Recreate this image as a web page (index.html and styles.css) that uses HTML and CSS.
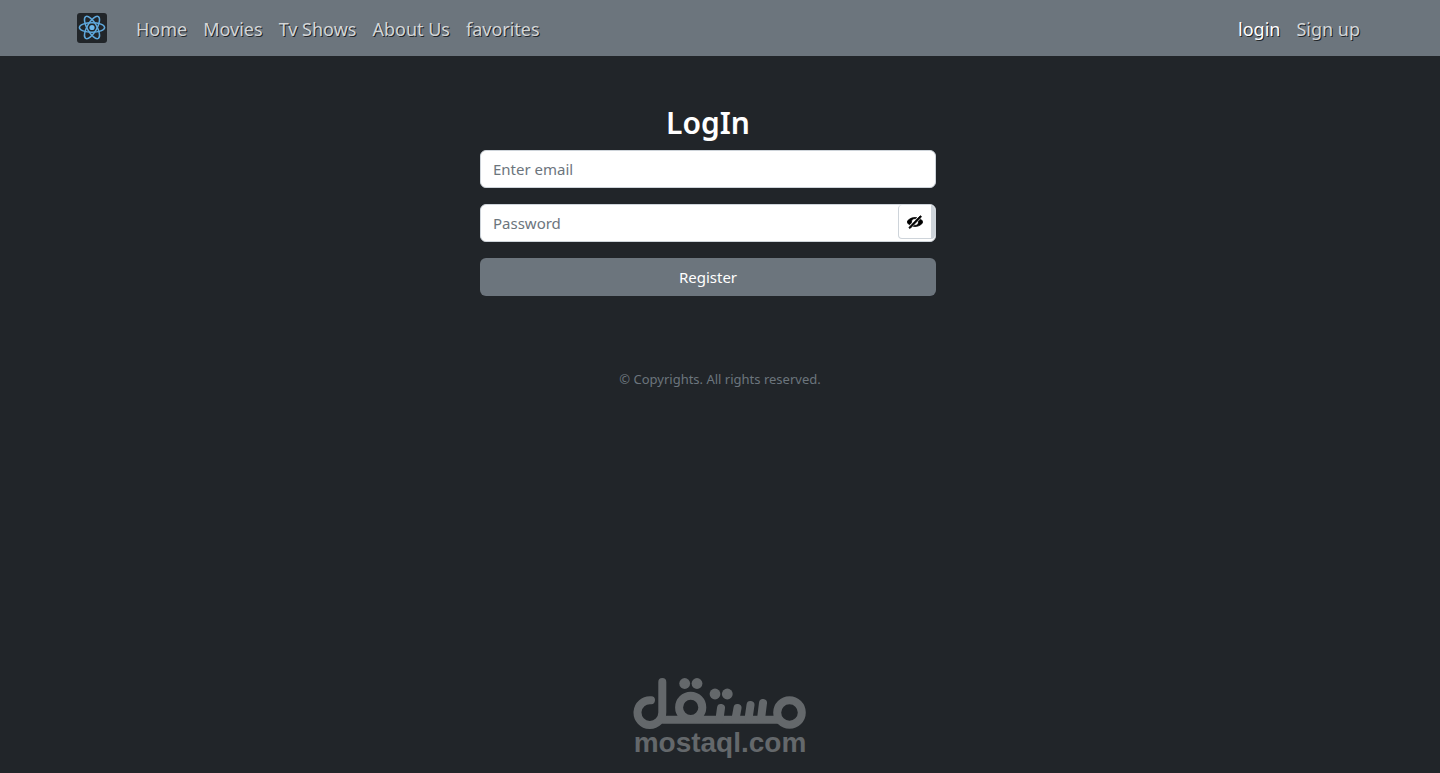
FILE: index.html
```html
<!doctype html>
<html lang="en">
  <head>
    <meta charset="utf-8" />
    <meta name="viewport" content="width=device-width, initial-scale=1" />
    <title>Login</title>
    <link rel="stylesheet" href="styles.css">
  </head>
  <body>
    <header class="navbar">
      <nav class="container">
        <a class="brand" href="#" aria-label="Home page">
          <svg width="30" height="30" viewBox="0 0 30 30">
            <rect width="30" height="30" rx="3" fill="#212529" />
            <g fill="none" stroke="#5fa8dc" stroke-width="1.5">
              <ellipse cx="15" cy="14.5" rx="12.6" ry="4.8" />
              <ellipse cx="15" cy="14.5" rx="12.6" ry="4.8" transform="rotate(60 15 14.5)" />
              <ellipse cx="15" cy="14.5" rx="12.6" ry="4.8" transform="rotate(120 15 14.5)" />
            </g>
            <circle cx="15" cy="14.5" r="2.6" fill="#6cb8ec" />
          </svg>
        </a>
        <ul class="nav">
          <li><a href="#">Home</a></li>
          <li><a href="#">Movies</a></li>
          <li><a href="#">Tv Shows</a></li>
          <li><a href="#">About Us</a></li>
          <li><a href="#">favorites</a></li>
        </ul>
        <ul class="nav nav-right">
          <li><a class="active" href="#">login</a></li>
          <li><a href="#">Sign up</a></li>
        </ul>
      </nav>
    </header>

    <main class="login">
      <h1>LogIn</h1>
      <form>
        <input class="field" type="email" placeholder="Enter email" aria-label="Email" />
        <div class="field password">
          <input type="password" placeholder="Password" aria-label="Password" />
          <button class="toggle" type="button" aria-label="Show password">
            <svg width="16" height="16" viewBox="0 0 20 20">
              <path d="M17.6 2.6a1 1 0 0 0-1.4 0L3 16.2a1 1 0 1 0 1.4 1.4L17.6 4a1 1 0 0 0 0-1.4zM3.108 13.498l2.56-2.56A4.18 4.18 0 0 1 5.555 10c0-2.379 1.99-4.309 4.445-4.309.286 0 .564.032.835.082l1.203-1.202A12.645 12.645 0 0 0 10 4.401C3.44 4.4 0 9.231 0 10c0 .423 1.057 2.09 3.108 3.497zM16.895 6.502l-2.562 2.56c.069.302.111.613.111.938 0 2.379-1.989 4.307-4.444 4.307-.284 0-.56-.032-.829-.081l-1.204 1.203c.642.104 1.316.17 2.033.17 6.56 0 10-4.833 10-5.599 0-.424-1.056-2.09-3.105-3.498z" stroke="#000" stroke-width="1" />
            </svg>
          </button>
        </div>
        <button class="submit" type="submit">Register</button>
      </form>
    </main>

    <footer>&copy; Copyrights. All rights reserved.</footer>

    <div class="watermark">
      <svg width="174" height="52" viewBox="0 0 174 52" fill="none" stroke="#64686b" stroke-width="8" stroke-linecap="round">
        <path d="M18 23.2a12.4 12.4 0 1 0 11.3 12.3V5" />
        <path d="M30 42.7H145" />
        <circle cx="57.7" cy="30.4" r="11.6" />
        <circle cx="156.5" cy="35.5" r="12.3" />
        <path d="M88 31l-1.5 11M104.5 31l-2 11M117.5 28l-2 14M130 26l-2 16" />
        <g fill="#64686b" stroke="none">
          <circle cx="51.7" cy="6.5" r="5.4" />
          <circle cx="64" cy="6.5" r="5.4" />
          <circle cx="82" cy="17" r="5.4" />
          <circle cx="94.3" cy="17" r="5.4" />
        </g>
      </svg>
      <span>mostaql.com</span>
    </div>
  </body>
</html>
```
FILE: styles.css
```css
* {
  box-sizing: border-box;
}
body {
  display: flex;
  flex-direction: column;
  min-height: 100vh;
  margin: 0;
  background: #212529;
  color: #fff;
  font-family: "Segoe UI", "Noto Sans", sans-serif;
  font-size: 15px;
  line-height: 24px;
}
a {
  text-decoration: none;
}
.navbar {
  background: #6c757d;
}
.container {
  display: flex;
  align-items: center;
  max-width: 1320px;
  height: 56px;
  margin: 0 auto;
  padding: 0 12px;
}
.brand {
  display: flex;
  margin: 0 21px 0 5px;
}
.nav {
  display: flex;
  margin: 0;
  padding: 0;
  list-style: none;
}
.nav a {
  display: block;
  padding: 9px 8px 7px;
  color: #d3d6d8;
  font-size: 18px;
  text-shadow: 1px 1px #212529;
}
.nav a.active {
  color: #fff;
}
.nav-right {
  margin-left: auto;
}
.login {
  width: calc(100% / 3);
  margin: 48px auto 0;
  padding-right: 24px;
}
.login h1 {
  margin: 0 0 8px;
  font-size: 30px;
  font-weight: 600;
  line-height: 38px;
  text-align: center;
}
form {
  display: flex;
  flex-direction: column;
  gap: 16px;
}
input,
button {
  font: inherit;
}
.field {
  width: 100%;
  height: 38px;
  padding: 0 12px;
  border: 1px solid #ced4da;
  border-radius: 6px;
  background: #fff;
}
input::placeholder {
  color: #6c757d;
}
.password {
  display: flex;
  padding-right: 0;
  overflow: hidden;
}
.password input {
  flex: 1;
  min-width: 0;
  padding: 0;
  border: 0;
  outline: 0;
}
.toggle {
  display: flex;
  align-items: center;
  width: 37px;
  height: 34px;
  padding: 0 8px;
  border: 0;
  border-right: 4px solid #ced4da;
  border-left: 1px solid #ced4da;
  border-bottom: 1px solid #ced4da;
  border-radius: 4px;
  background: #fff;
  cursor: pointer;
}
.submit {
  height: 38px;
  border: 0;
  border-radius: 6px;
  background: #6c757d;
  color: #fff;
  cursor: pointer;
}
footer {
  margin-top: 71px;
  color: #6c757d;
  font-size: 13px;
  text-align: center;
}
.watermark {
  display: flex;
  flex-direction: column;
  align-items: center;
  margin-top: auto;
  padding-bottom: 16px;
  color: #64686b;
  font-family: "Liberation Sans", sans-serif;
  font-size: 28px;
  font-weight: 700;
  line-height: 28px;
}
```
